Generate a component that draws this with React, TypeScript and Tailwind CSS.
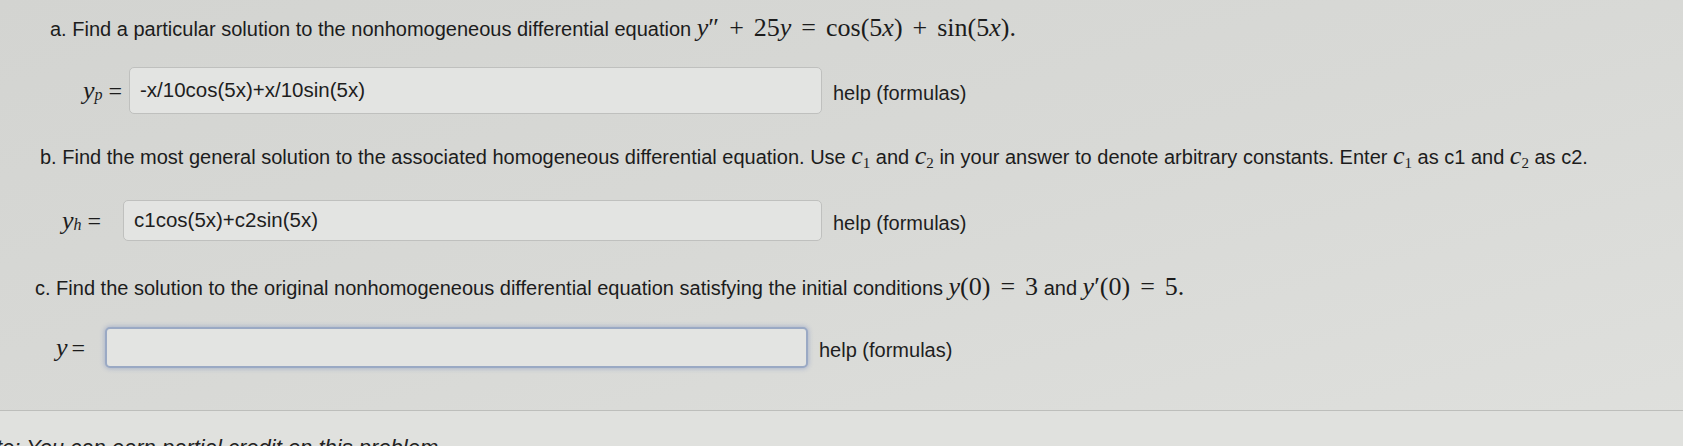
import React from 'react';

const M: React.FC<{ children: React.ReactNode }> = ({ children }) => (
  <span className="font-['Liberation_Serif',serif] text-[26px] leading-none">{children}</span>
);
const V: React.FC<{ children: React.ReactNode }> = ({ children }) => (
  <span className="font-['Liberation_Serif',serif] italic text-[26px] leading-none">{children}</span>
);
// operator with KaTeX-like spacing
const Op: React.FC<{ children: React.ReactNode }> = ({ children }) => (
  <span className="font-['Liberation_Serif',serif] text-[26px] leading-none mx-[10px]">{children}</span>
);
const Sub: React.FC<{ children: React.ReactNode }> = ({ children }) => (
  <sub className="font-['Liberation_Serif',serif] text-[15px]">{children}</sub>
);

const Answer: React.FC<{ label: React.ReactNode; value: string; focused?: boolean; box: string; className: string }> = ({ label, value, focused, box, className }) => (
  <div className={`flex items-center ${className}`}>
    <div className="flex items-center shrink-0">{label}</div>
    <div
      className={`flex items-center ${box} rounded-[5px] bg-[#e3e4e2] px-[10px] text-[20.5px] text-[#1e1e1e] ${
        focused
          ? 'border-2 border-[#9aa9c4] shadow-[0_0_4px_1px_rgba(120,140,190,0.45)]'
          : 'border border-[#bfc0be]'
      }`}
    >
      {value}
    </div>
    <span className="ml-[11px] mt-[4px] text-[20px] text-[#1e1e1e]">help (formulas)</span>
  </div>
);

const App: React.FC = () => {
  return (
    <div className="w-[1683px] h-[446px] overflow-hidden bg-gradient-to-br from-[#d3d4d1] via-[#d8d9d6] to-[#dfe0dd] font-['Liberation_Sans',Arial,sans-serif] text-[#1c1c1c]">
      <div className="h-[410px] flex flex-col">
        {/* part a */}
        <p className="ml-[50px] mt-[15px] h-[28px] text-[20px] leading-[28px] whitespace-nowrap">
          a. Find a particular solution to the nonhomogeneous differential equation{' '}
          <V>y</V>
          <M>″</M>
          <Op>+</Op>
          <M>25</M>
          <V>y</V>
          <Op>=</Op>
          <M>cos(5</M>
          <V>x</V>
          <M>)</M>
          <Op>+</Op>
          <M>sin(5</M>
          <V>x</V>
          <M>).</M>
        </p>
        <Answer
          className="ml-[83px] mt-[24px]"
          box="w-[693px] h-[47px]"
          label={
            <span className="w-[46px] flex items-center">
              <V>y</V>
              <span className="font-['Liberation_Serif',serif] italic text-[16px] mt-[8px]">p</span>
              <span className="font-['Liberation_Serif',serif] text-[24px] ml-[6px]">=</span>
            </span>
          }
          value="-x/10cos(5x)+x/10sin(5x)"
        />

        {/* part b */}
        <p className="ml-[40px] mt-[29px] h-[28px] text-[20px] leading-[28px] whitespace-nowrap">
          b. Find the most general solution to the associated homogeneous differential equation. Use <V>c</V>
          <Sub>1</Sub> and <V>c</V>
          <Sub>2</Sub> in your answer to denote arbitrary constants. Enter <V>c</V>
          <Sub>1</Sub> as c1 and <V>c</V>
          <Sub>2</Sub> as c2.
        </p>
        <Answer
          className="ml-[62px] mt-[29px]"
          box="w-[699px] h-[41px]"
          label={
            <span className="w-[61px] flex items-center">
              <V>y</V>
              <span className="font-['Liberation_Serif',serif] italic text-[16px] mt-[8px]">h</span>
              <span className="font-['Liberation_Serif',serif] text-[24px] ml-[6px]">=</span>
            </span>
          }
          value="c1cos(5x)+c2sin(5x)"
        />

        {/* part c */}
        <p className="ml-[35px] mt-[33px] h-[28px] text-[20px] leading-[28px] whitespace-nowrap">
          c. Find the solution to the original nonhomogeneous differential equation satisfying the initial conditions{' '}
          <V>y</V>
          <M>(0)</M>
          <Op>=</Op>
          <M>3</M> and <V>y</V>
          <M>′(0)</M>
          <Op>=</Op>
          <M>5.</M>
        </p>
        <Answer
          className="ml-[56px] mt-[25px]"
          box="w-[703px] h-[41px]"
          focused
          label={
            <span className="w-[49px] flex items-center">
              <V>y</V>
              <span className="font-['Liberation_Serif',serif] text-[24px] ml-[4px]">=</span>
            </span>
          }
          value=""
        />
      </div>
      <div className="h-[36px] border-t border-[#bdbebb] bg-[#e0e1de]">
        <p className="-ml-[4px] mt-[20px] italic text-[22px] text-[#222] whitespace-nowrap">te: You can earn partial credit on this problem.</p>
      </div>
    </div>
  );
};

export default App;
